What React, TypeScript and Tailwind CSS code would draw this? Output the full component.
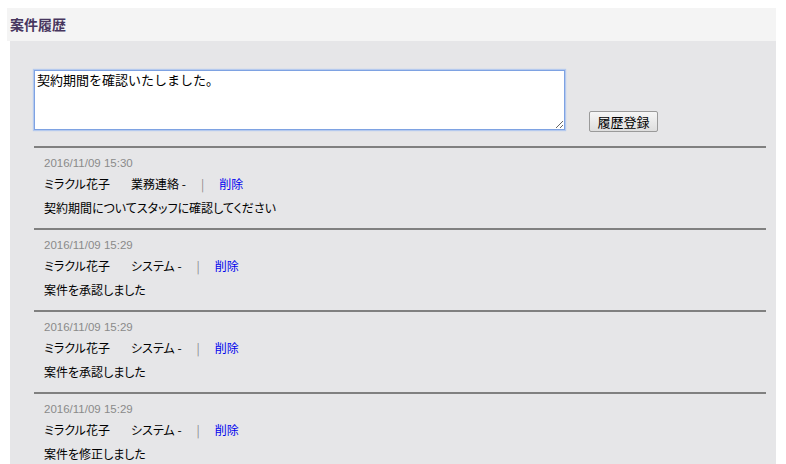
import React from "react";

const entries = [
  { date: "2016/11/09 15:30", name: "ミラクル花子", cat: "業務連絡", body: "契約期間についてスタッフに確認してください" },
  { date: "2016/11/09 15:29", name: "ミラクル花子", cat: "システム", body: "案件を承認しました" },
  { date: "2016/11/09 15:29", name: "ミラクル花子", cat: "システム", body: "案件を承認しました" },
  { date: "2016/11/09 15:29", name: "ミラクル花子", cat: "システム", body: "案件を修正しました" },
];

export default function App() {
  return (
    <div className="w-[786px] h-[464px] overflow-hidden bg-white pt-[8px] font-['Noto_Sans_CJK_JP','Noto_Sans',sans-serif] text-black">
      <div className="ml-[7px] w-[769px] h-[33px] bg-[#f4f4f4] pl-[3px] flex items-center">
        <span className="text-[14px] font-bold leading-[16px] text-[#47365e] pb-[1px]">案件履歴</span>
      </div>
      <div className="ml-[10px] w-[766px] bg-[#e6e6e8] pt-[29px] pl-[24px] pr-[10px] pb-[40px]">
        <div className="flex items-start">
          <textarea
            defaultValue="契約期間を確認いたしました。"
            className="w-[531px] h-[60px] bg-white border border-[#7ea2e2] shadow-[0_0_1px_1px_#b4c9ee] px-[2px] py-[1px] text-[13px] leading-[16px] text-black outline-none font-['Noto_Sans_CJK_JP',sans-serif]"
          />
          <button className="ml-[24px] mt-[41px] w-[69px] h-[21px] border border-[#9a9a9a] rounded-[2px] bg-gradient-to-b from-[#f6f6f6] to-[#dedede] text-[13px] leading-[16px] text-black flex items-center justify-center">
            履歴登録
          </button>
        </div>
        <div className="mt-[14px]">
          {entries.map((e, i) => (
            <div key={i} className="border-t-2 border-[#808080] pt-[8px] pb-[12px] pl-[10px]">
              <div className="text-[11.5px] leading-[14px] text-[#8a8a8a] font-['Liberation_Sans',sans-serif]">{e.date}</div>
              <div className="mt-[6px] flex items-center text-[12px] leading-[16px] [font-feature-settings:'palt']">
                <span className="w-[87px]">{e.name}</span>
                <span>{e.cat} -</span>
                <span className="ml-[15px] text-[#8a8a8a]">|</span>
                <span className="ml-[15px] text-[#0000ee]">削除</span>
              </div>
              <div className="mt-[8px] text-[12px] leading-[16px] [font-feature-settings:'palt']">{e.body}</div>
            </div>
          ))}
        </div>
      </div>
    </div>
  );
}
